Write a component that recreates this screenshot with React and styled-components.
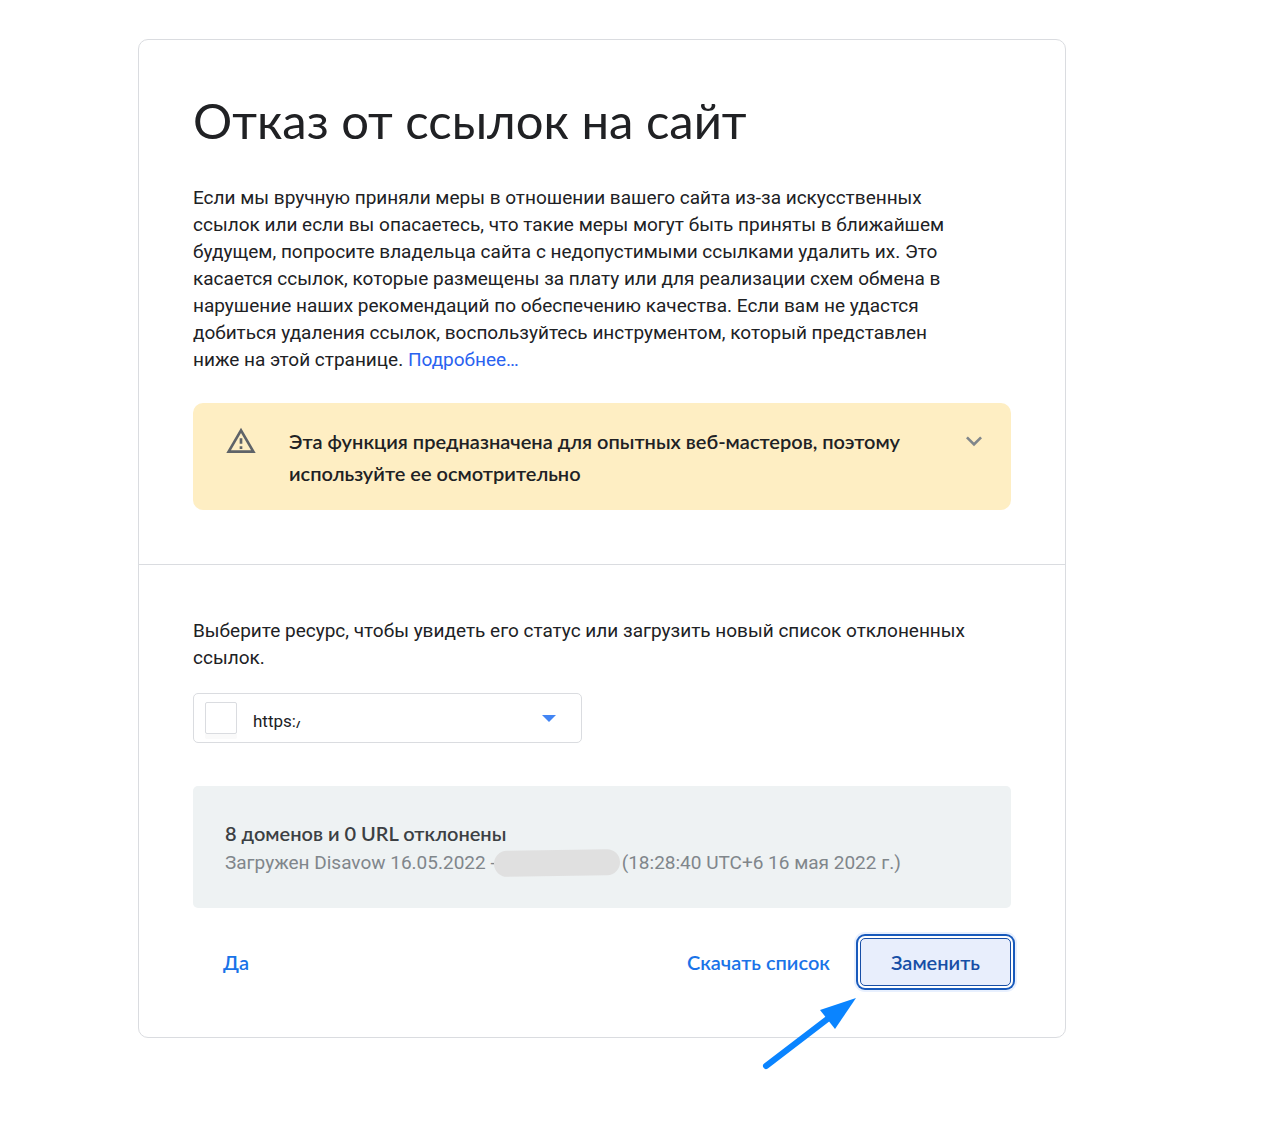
import React, { useState } from "react";
import styled, { createGlobalStyle } from "styled-components";

const GlobalStyle = createGlobalStyle`
  *, *::before, *::after { box-sizing: border-box; }
  body { margin: 0; background: #fff; color: #202124; }
  body, button, select { font-family: Roboto, "Liberation Sans", sans-serif; }
`;

const display = `"Lato", "Open Sans", sans-serif`;

const Page = styled.main`
  padding: 39px 220px 86px 138px;
  @media (max-width: 900px) { padding: 24px; }
`;

const Card = styled.article`
  border: 1px solid #dadce0;
  border-radius: 10px;
`;

const Section = styled.section`
  padding: ${(p) => p.$padding};
  & + & { border-top: 1px solid #dadce0; }
`;

const Title = styled.h1`
  margin: 0 0 32px;
  font: 400 49px/64px ${display};
`;

const Text = styled.p`
  display: block;
  margin: 0;
  max-width: 782px;
  font-size: 19px;
  line-height: 27px;
`;

const Link = styled.a`
  color: #2962f0;
  text-decoration: none;
`;

const Notice = styled.div`
  display: flex;
  align-items: flex-start;
  margin-top: 30px;
  padding: 22px 21px 21px 32px;
  border-radius: 10px;
  background: #feeec3;
`;

const NoticeText = styled.h2`
  flex: 1;
  margin: 0 32px;
  font: 600 20px/32px ${display};
`;

const IconButton = styled.button`
  display: flex;
  padding: 0;
  border: 0;
  background: none;
  color: #80868b;
  cursor: pointer;
`;

const Picker = styled.div`
  display: grid;
  grid-template-columns: 12px 32px 1fr 14px 26px;
  align-items: center;
  width: 389px;
  max-width: 100%;
  height: 50px;
  margin-top: 22px;
`;

const PickerSelect = styled.select`
  grid-area: 1 / 1 / 2 / -1;
  width: 100%;
  height: 100%;
  padding: 6px 48px 0 59px;
  border: 1px solid #dadce0;
  border-radius: 5px;
  background: #fff;
  color: #202124;
  font-size: 17px;
  appearance: none;
`;

const Favicon = styled.span`
  position: relative;
  grid-area: 1 / 2;
  height: 32px;
  border: 1px solid #dadce0;
  border-radius: 2px;
  box-shadow: 0 5px 0 #fafafa;
  pointer-events: none;
`;

const Eraser = styled.span`
  position: absolute;
  top: 4px;
  left: 91px;
  width: 12px;
  height: 14px;
  background: #fff;
`;

const Caret = styled.svg`
  grid-area: 1 / 4;
  pointer-events: none;
`;

const Status = styled.div`
  margin-top: 43px;
  padding: 32px 32px 30px;
  border-radius: 5px;
  background: #eef2f3;
`;

const StatusTitle = styled.h2`
  margin: 0;
  color: #3c4043;
  font: 600 20px/30px ${display};
`;

const StatusText = styled.p`
  display: flex;
  flex-wrap: wrap;
  align-items: center;
  margin: 0;
  color: #80868b;
  font-size: 19px;
  line-height: 30px;
`;

const Redacted = styled.span`
  width: 126px;
  height: 26px;
  margin: 0 2px 0 -2px;
  border-radius: 13px;
  background: #e0e0e0;
  transform: rotate(-1deg);
`;

const Actions = styled.div`
  display: flex;
  align-items: center;
  height: 50px;
  margin-top: 29px;
`;

const Button = styled.button`
  display: block;
  height: 48px;
  padding: 0 30px;
  border: 0;
  border-radius: 5px;
  background: none;
  color: #1a73e8;
  font: 600 20px/32px ${display};
  cursor: pointer;
`;

const Primary = styled(Button)`
  border: 1px solid #174ea6;
  background: #e8eefc;
  color: #174ea6;
  box-shadow: 0 0 0 2px #fff, 0 0 0 4px #185abc, 0 0 0 6px #e8f0fe;
`;

const Spacer = styled.span`
  flex: 1;
`;

const Pointed = styled.div`
  position: relative;
`;

const Pointer = styled.svg`
  position: absolute;
  top: 57px;
  right: 151px;
  pointer-events: none;
`;

export default function App() {
  const [site, setSite] = useState("https:/");
  return (
    <>
      <GlobalStyle />
      <Page>
        <Card>
          <Section $padding="48px 54px 54px">
            <Title>Отказ от ссылок на сайт</Title>
            <Text>
              Если мы вручную приняли меры в отношении вашего сайта из-за
              искусственных ссылок или если вы опасаетесь, что такие меры могут
              быть приняты в ближайшем будущем, попросите владельца сайта с
              недопустимыми ссылками удалить их. Это касается ссылок, которые
              размещены за плату или для реализации схем обмена в нарушение
              наших рекомендаций по обеспечению качества. Если вам не удастся
              добиться удаления ссылок, воспользуйтесь инструментом, который
              представлен ниже на этой странице. <Link href="#more">Подробнее…</Link>
            </Text>
            <Notice>
              <svg width="32" height="32" viewBox="0 0 24 24" fill="#5f6368" aria-hidden="true">
                <path d="M12 5.99 19.53 19H4.47L12 5.99M12 2 1 21h22L12 2zm1 14h-2v2h2v-2zm0-6h-2v4h2v-4z" />
              </svg>
              <NoticeText>
                Эта функция предназначена для опытных веб-мастеров, поэтому
                используйте ее осмотрительно
              </NoticeText>
              <IconButton type="button" aria-label="Развернуть">
                <svg width="32" height="32" viewBox="0 0 24 24" fill="currentColor" aria-hidden="true">
                  <path d="M7.41 8.59 12 13.17l4.59-4.58L18 10l-6 6-6-6 1.41-1.41z" />
                </svg>
              </IconButton>
            </Notice>
          </Section>

          <Section $padding="52px 54px 50px">
            <Text as="label" htmlFor="site">
              Выберите ресурс, чтобы увидеть его статус или загрузить новый
              список отклоненных ссылок.
            </Text>
            <Picker>
              <PickerSelect id="site" value={site} onChange={(e) => setSite(e.target.value)}>
                <option>https:/</option>
              </PickerSelect>
              <Favicon>
                <Eraser />
              </Favicon>
              <Caret width="14" height="7" viewBox="0 0 14 7" aria-hidden="true">
                <path d="M0 0h14L7 7z" fill="#4285f4" />
              </Caret>
            </Picker>
            <Status>
              <StatusTitle>8 доменов и 0 URL отклонены</StatusTitle>
              <StatusText>
                Загружен Disavow 16.05.2022 -
                <Redacted />
                (18:28:40 UTC+6 16 мая 2022 г.)
              </StatusText>
            </Status>
            <Actions>
              <Button type="button">Да</Button>
              <Spacer />
              <Button type="button">Скачать список</Button>
              <Pointed>
                <Primary type="button">Заменить</Primary>
                <Pointer width="100" height="80" viewBox="0 0 100 80" aria-hidden="true">
                  <path d="M6 71 70 22" stroke="#0a84ff" strokeWidth="6" strokeLinecap="round" />
                  <path d="M96 3 60 15 75 34z" fill="#0a84ff" />
                </Pointer>
              </Pointed>
            </Actions>
          </Section>
        </Card>
      </Page>
    </>
  );
}
